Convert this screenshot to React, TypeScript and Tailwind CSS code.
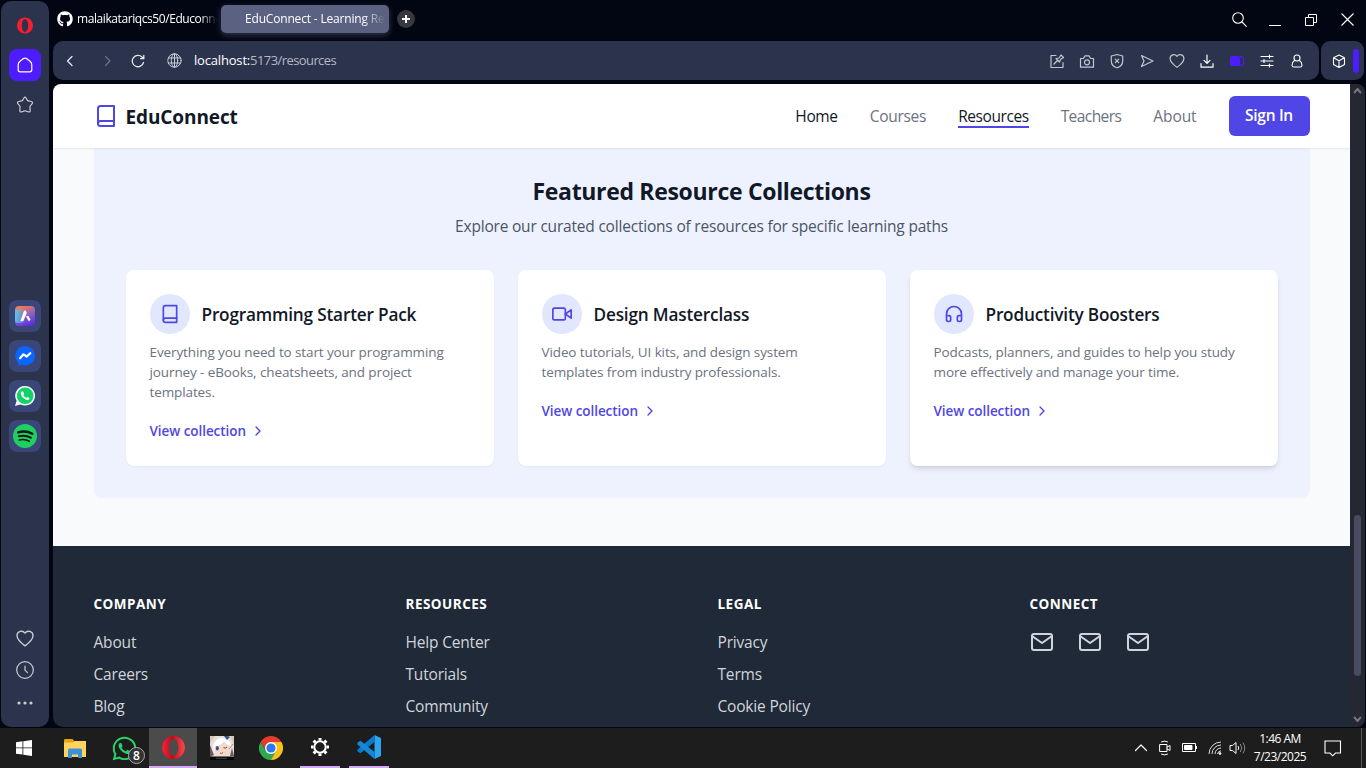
import React from "react";
import { FaGithub, FaWhatsapp } from "react-icons/fa";

type P = { className?: string; children: React.ReactNode; size?: number; sw?: number; vb?: string };
const Ico = ({ className = "", children, size = 24, sw = 2, vb = "0 0 24 24" }: P) => (
  <svg width={size} height={size} viewBox={vb} fill="none" stroke="currentColor" strokeWidth={sw} strokeLinecap="round" strokeLinejoin="round" className={`shrink-0 ${className}`}>
    {children}
  </svg>
);

const Book = () => (
  <>
    <path d="M4 19.5A2.5 2.5 0 0 1 6.5 17H20" />
    <path d="M6.5 2H20v20H6.5A2.5 2.5 0 0 1 4 19.5v-15A2.5 2.5 0 0 1 6.5 2z" />
  </>
);
const Video = () => (
  <>
    <path d="M23 7l-7 5 7 5V7z" />
    <rect x="1" y="5" width="15" height="14" rx="2" />
  </>
);
const Headphones = () => (
  <path d="M3 14h3a2 2 0 0 1 2 2v3a2 2 0 0 1-2 2H5a2 2 0 0 1-2-2v-7a9 9 0 0 1 18 0v7a2 2 0 0 1-2 2h-1a2 2 0 0 1-2-2v-3a2 2 0 0 1 2-2h3" />
);
const Mail = () => (
  <>
    <path d="M4 4h16c1.100 0 2 .9 2 2v12c0 1.100-.9 2-2 2H4c-1.100 0-2-.9-2-2V6c0-1.100.9-2 2-2z" />
    <path d="m22 6-10 7L2 6" />
  </>
);

const heart = "M8 14C4 11 1.500 8.500 1.500 5.600A3.600 3.600 0 0 1 8 3.600a3.600 3.600 0 0 1 6.500 2C14.500 8.500 12 11 8 14z";

function Sidebar() {
  const tile = "flex size-8 items-center justify-center rounded-lg bg-[#3a4677]";
  return (
    <aside className="ml-px mt-px flex h-[726px] w-12 shrink-0 flex-col items-center rounded-[10px] bg-[#2c334c]">
      <svg className="mt-4" width="16" height="17" viewBox="0 0 16 17">
        <path fillRule="evenodd" fill="#fa1e2d" d="M8 .5a8 8 0 1 0 0 16a8 8 0 1 0 0-16zM8 2.200c2 0 3.200 2.600 3.200 6.300S10 14.800 8 14.800S4.800 12.200 4.800 8.500S6 2.200 8 2.200z" />
      </svg>
      <div className="mt-[15px] flex size-8 items-center justify-center rounded-lg bg-[#4d1cff] text-white">
        <Ico size={16} sw={1.2} vb="0 0 16 16"><path d="M5.800 2 3 4.200Q1.200 5.600 1.200 8v4.800a2 2 0 0 0 2 2h9.600a2 2 0 0 0 2-2V8q0-2.400-1.800-3.800L10.200 2Q8 .3 5.800 2z" /></Ico>
      </div>
      <Ico size={18} sw={1.2} vb="0 0 18 18" className="mt-[15px] text-[#c9ccd6]">
        <path d="M7.800 2.200Q9 .2 10.200 2.200l1.400 2.400 3.700.9q2 .6.800 2.200L13.900 10.500l.3 4q0 1.800-1.700 1.400L9 14.800l-3.500 1.100q-1.700.4-1.700-1.400l.3-4L1.900 7.700Q.7 6.100 2.700 5.500l3.700-.9z" />
      </Ico>
      <div className="mt-[186px] flex flex-col gap-2">
        <div className={tile}>
          <svg width="20" height="20" viewBox="0 0 20 20">
            <defs>
              <linearGradient id="aria" x1="0.300" y1="0" x2="0.700" y2="1"><stop offset="0" stopColor="#ff7a45" /><stop offset=".5" stopColor="#8a62c4" /><stop offset="1" stopColor="#5a2ee0" /></linearGradient>
              <linearGradient id="ariaL" x1="0" y1="0" x2="1" y2="0"><stop offset="0" stopColor="#4fc9ee" /><stop offset=".5" stopColor="#4fc9ee" stopOpacity="0" /></linearGradient>
            </defs>
            <rect width="20" height="20" rx="4" fill="url(#aria)" /><rect y="3" width="20" height="14" rx="3" fill="url(#ariaL)" />
            <path d="M9 4.800q1-.8 1.800 0l1 2.200-3.600 8.300H5.300z" fill="#fff" /><path d="M11 10.500q1.500-1.200 2.500-.3l2 3.300-1.500 2z" fill="#fff" />
          </svg>
        </div>
        <div className={tile}>
          <svg width="20" height="20" viewBox="0 0 20 20"><path d="M10 0a10 9.700 0 1 1-3.500 18.800L3.500 20v-3.200A9.700 9.700 0 0 1 10 0z" fill="#0b66ff" /><path d="m5 12.200 3.500-3.900 3.200 2.200 3.600-3.300" stroke="#fff" strokeWidth="2.200" fill="none" strokeLinejoin="round" strokeLinecap="round" /></svg>
        </div>
        <div className={tile}>
          <svg width="20" height="20" viewBox="0 0 20 20"><path d="M10.200 0a9.800 9.800 0 1 1-4.700 18.400L0 20l1.600-5.200A9.800 9.800 0 0 1 10.200 0z" fill="#f4f6f6" /><circle cx="10.200" cy="9.800" r="8.300" fill="#0fd366" /><path d="M7 5.200c-2 1-1.300 4 .900 6.400s5.200 3.500 6.500 1.500c.400-1-.200-1.500-1.700-2.100-.600-.200-1 .900-1.500.800-1-.300-2.700-2-2.800-2.800 0-.400.900-.900.700-1.400C8.500 6 8.100 5 7 5.200z" fill="#fff" /></svg>
        </div>
        <div className={tile}>
          <svg width="24" height="24" viewBox="0 0 24 24"><circle cx="12" cy="12" r="12" fill="#1fcf62" /><g stroke="#0b1a10" fill="none" strokeLinecap="round"><path d="M5.200 8.300c4.500-1.300 10-.9 14.200 1.400" strokeWidth="2.400" /><path d="M5.800 12.300c4-1.100 8.500-.600 12 1.400" strokeWidth="2" /><path d="M6.300 16c3.500-.900 7-.500 10 1.300" strokeWidth="1.600" /></g></svg>
        </div>
      </div>
      <div className="mt-[176px] flex flex-col items-center text-[#c9ccd6]">
        <Ico size={20} sw={1.100} vb="-0.100 -0.500 16.200 16.200"><path d={heart} /></Ico>
        <Ico size={18} sw={1.200} vb="0 0 18 18" className="mt-[13px]"><circle cx="9" cy="9" r="8.300" /><path d="M9 5v4.200l2.500 2.500" /></Ico>
        <svg width="16" height="4" viewBox="0 0 16 4" className="mt-[22px]" fill="currentColor"><circle cx="2" cy="2" r="1.600" /><circle cx="8" cy="2" r="1.600" /><circle cx="14" cy="2" r="1.600" /></svg>
      </div>
    </aside>
  );
}

function TabBar() {
  return (
    <div className="flex h-[41px] items-start text-[12px] text-white">
      <div className="mt-[9px] flex h-5 w-[165px] items-center overflow-hidden pl-1">
        <FaGithub className="size-4 shrink-0" />
        <span className="ml-1 w-[140px] shrink-0 overflow-hidden whitespace-nowrap tracking-[-0.420px] [mask-image:linear-gradient(90deg,#000_88%,transparent)]">malaikatariqcs50/Educonnect</span>
      </div>
      <div className="ml-[3px] mt-[5px] flex h-7 w-[168px] items-center rounded-[5px] bg-[#5b6180] pl-6 shadow-[0_2px_6px_#5b618088]">
        <span className="w-[140px] overflow-hidden whitespace-nowrap tracking-[-0.18px] [mask-image:linear-gradient(90deg,#000_84%,transparent)]">EduConnect - Learning Resources</span>
      </div>
      <div className="ml-2 mt-[10px] flex size-[18px] items-center justify-center rounded-full bg-[#37383f]">
        <svg width="8" height="8" stroke="#fff" strokeWidth="2"><path d="M4 0v8M0 4h8" /></svg>
      </div>
      <div className="ml-auto mr-3 mt-3 flex items-center text-white">
        <Ico size={15} sw={1.100} vb="0 0 15 15"><circle cx="6" cy="6" r="5.300" /><path d="m10 10 4.300 4.300" /></Ico>
        <svg width="12" height="14" className="ml-[22px]"><path d="M0 12.500h12" stroke="#fff" /></svg>
        <svg width="12" height="12" className="ml-6" fill="none" stroke="#fff"><path d="M.5 3.500h8v8h-8zM3.500 3.500v-3h8v8h-3" /></svg>
        <svg width="13" height="13" className="ml-6" stroke="#fff" strokeWidth="1.100"><path d="m.5.5 12 12M12.500.5l-12 12" /></svg>
      </div>
    </div>
  );
}

function AddressBar() {
  return (
    <div className="flex h-[39px] gap-0.5">
      <div className="flex w-[1266px] items-center rounded-[10px] bg-[#2c334c] pl-[10px] pr-[14px] text-[#e6e8ee]">
        <Ico size={14} sw={1.300} vb="0 0 14 14"><path d="M9 2.500 4.500 7 9 11.500" /></Ico>
        <Ico size={14} sw={1.200} vb="0 0 14 14" className="ml-[23px] text-[#6e7489]"><path d="M5.500 2.500 10 7l-4.500 4.500" /></Ico>
        <Ico size={14} sw={1.300} vb="0 0 14 14" className="ml-[17px]"><path d="M12.500 8.500A5.700 5.700 0 1 1 11 3l1.700 1.500M12.800 1.500v3.200H9.600" /></Ico>
        <Ico size={15} sw={1} vb="0 0 15 15" className="ml-[22px] text-[#c9ccd6]"><circle cx="7.500" cy="7.500" r="6.700" /><ellipse cx="7.500" cy="7.500" rx="3.200" ry="6.700" /><path d="M1.500 5h12M1.500 10h12M7.500 1v13" /></Ico>
        <span className="ml-3 whitespace-nowrap text-[13px] tracking-[-0.58px] text-[#b4b8c5]"><span className="tracking-[-0.18px] text-white">localhost:</span>5173/resources</span>
        <div className="ml-auto flex items-center gap-[14px] text-[#c3c6d0]">
          <Ico size={16} sw={1.200} vb="0 0 16 16"><path d="M7 2.500H2v12h12V9.500M5 11l3-3M7 5.500 10.500 9l1-2.500 3-2-2.500-2.500-2 3z" /></Ico>
          <Ico size={16} sw={1.200} vb="0 0 16 16"><path d="M1.500 5.500h3L6 2.800h4l1.500 2.700h3v8.700h-13z" /><circle cx="8" cy="9.300" r="2.500" /></Ico>
          <Ico size={16} sw={1.200} vb="0 0 16 16"><path d="M8 1.500 13.700 3v5c0 3.500-2.500 5.800-5.700 6.800C4.800 13.800 2.300 11.500 2.300 8V3zM6.300 6.200l3.400 3.400M9.700 6.200 6.300 9.600" /></Ico>
          <Ico size={16} sw={1.200} vb="0 0 16 16"><path d="M2.500 2.500 14 8 2.500 13.500 5 8z" /></Ico>
          <Ico size={16} sw={1.100} vb="0.500 0.500 15 15"><path d={heart} /></Ico>
          <Ico size={16} sw={1.200} vb="0 0 16 16" className="text-white"><path d="M8 2v8M5 7.300l3 3 3-3M2 10.500v3.700h12v-3.700" /></Ico>
          <svg width="16" height="16" viewBox="0 0 16 16"><rect x="1" y="3" width="10" height="10" rx="1.500" fill="#4d1cff" /><path d="M11 3.500h1.500L14.500 5v6l-2 1.500H11" stroke="#4d1cff" fill="none" strokeWidth="1.200" /></svg>
          <Ico size={16} sw={1.200} vb="0 0 16 16" className="text-white"><path d="M2 3.500h12M2 8h12M2 12.500h12M10.500 2v3M5 6.500v3M10.500 11v3" /></Ico>
          <Ico size={16} sw={1.100} vb="0 0 16 16" className="text-white"><circle cx="8" cy="5" r="3" /><path d="M5.500 7.500C3.500 8.800 3 10.500 3 12.200c0 1 .7 1.800 1.800 1.800h6.400c1.100 0 1.800-.8 1.800-1.800 0-1.700-.5-3.400-2.500-4.700" /></Ico>
        </div>
      </div>
      <div className="flex w-[43px] items-center rounded-[9px] bg-[#2c334c] pl-[10px] text-white">
        <Ico size={16} sw={1.100} vb="0 0 16 16"><path d="m8 2 5.500 2.800v6.600L8 14.500l-5.500-3.100V4.800zM2.500 4.800 8 7.800l5.500-3M8 7.800v6.500" /></Ico>
        <div className="ml-1.5 h-6 w-[6px] rounded-full bg-[#4d1cff]" />
      </div>
    </div>
  );
}

function Header() {
  return (
    <header className="z-10 flex h-16 shrink-0 items-center bg-white px-[40.5px] shadow-[0_1px_2px_rgba(0,0,0,0.08)]">
      <Ico className="text-[#4f46e5]"><Book /></Ico>
      <span className="ml-2 pt-0.5 text-[19px] font-bold tracking-[-0.1px] text-[#111827]">EduConnect</span>
      <nav className="ml-auto flex items-center gap-8 text-[15.500px] text-[#6b7280]">
        <span className="pt-0.5 tracking-[-0.35px] text-[#111827]">Home</span>
        <span className="pt-0.5 tracking-[-0.28px]">Courses</span>
        <span className="relative pt-0.5 tracking-[-0.43px] text-[#111827]">Resources<i className="absolute inset-x-0 bottom-px h-0.5 bg-[#4f46e5]" /></span>
        <span className="pt-0.5 tracking-[-0.56px]">Teachers</span>
        <span className="pt-0.5 tracking-[-0.1px]">About</span>
        <span className="flex h-10 w-[81px] items-center justify-center rounded-md bg-[#4f46e5] text-[15.500px] font-semibold tracking-[-0.300px] text-white">Sign In</span>
      </nav>
    </header>
  );
}

const cards = [
  { t: "Programming Starter Pack", d: ["Everything you need to start your programming", "journey - eBooks, cheatsheets, and project", "templates."], i: <Book />, s: "shadow-[0_1px_2px_rgba(0,0,0,0.05)]" },
  { t: "Design Masterclass", d: ["Video tutorials, UI kits, and design system", "templates from industry professionals."], i: <Video />, s: "shadow-[0_1px_2px_rgba(0,0,0,0.05)]" },
  { t: "Productivity Boosters", d: ["Podcasts, planners, and guides to help you study", "more effectively and manage your time."], i: <Headphones />, s: "shadow-[0_4px_6px_-1px_rgba(0,0,0,0.1),0_2px_4px_-2px_rgba(0,0,0,0.1)]" },
];

function Featured() {
  return (
    <main className="flex h-[398px] shrink-0 flex-col bg-[#f9fafb] px-[40.500px]">
      <section className="h-[350px] rounded-b-lg bg-[#eef2ff] px-8 pt-[27px]">
        <h2 className="text-center text-[23px] font-bold leading-8 tracking-[-0.32px] text-[#111827]">Featured Resource Collections</h2>
        <p className="mt-[7px] text-center text-[15.500px] leading-6 tracking-[-0.2px] text-[#4b5563]">Explore our curated collections of resources for specific learning paths</p>
        <div className="mt-8 grid grid-cols-3 gap-6">
          {cards.map((c) => (
            <article key={c.t} className={`h-[196px] whitespace-nowrap rounded-lg bg-white p-6 ${c.s}`}>
              <div className="flex h-10 items-center">
                <div className="flex size-10 items-center justify-center rounded-full bg-[#e0e7ff] text-[#4f46e5]"><Ico size={20}>{c.i}</Ico></div>
                <h3 className="ml-3 pt-px text-[17.200px] font-semibold tracking-[-0.18px] text-[#111827]">{c.t}</h3>
              </div>
              <div className="mt-2 text-[13.500px] leading-5 tracking-[-0.11px] text-[#6b7280]">
                {c.d.map((l) => <p key={l}>{l}</p>)}
              </div>
              <a className="mt-[19px] flex h-5 items-center text-[13.500px] font-semibold tracking-[-0.06px] text-[#4f46e5]">
                <span className="w-24">View collection</span>
                <Ico size={16} className="ml-1"><path d="m9 18 6-6-6-6" /></Ico>
              </a>
            </article>
          ))}
        </div>
      </section>
    </main>
  );
}

function Footer() {
  const cols = [
    ["COMPANY", "About", "Careers", "Blog"],
    ["RESOURCES", "Help Center", "Tutorials", "Community"],
    ["LEGAL", "Privacy", "Terms", "Cookie Policy"],
  ];
  const head = "text-[13.500px] font-bold leading-5 tracking-[0.480px] text-white";
  return (
    <footer className="grid flex-1 grid-cols-4 gap-8 bg-[#1f2937] px-[40.500px] pt-12">
      {cols.map(([h, ...l]) => (
        <div key={h}>
          <h4 className={head}>{h}</h4>
          <ul className="mt-4 flex flex-col gap-2 text-[15.500px] leading-6 tracking-[-0.18px] text-[#d1d5db]">{l.map((x) => <li key={x}>{x}</li>)}</ul>
        </div>
      ))}
      <div>
        <h4 className={head}>CONNECT</h4>
        <div className="mt-4 flex gap-6 text-[#d1d5db]">{[0, 1, 2].map((k) => <Ico key={k}><Mail /></Ico>)}</div>
      </div>
    </footer>
  );
}

function Taskbar() {
  const cell = "flex h-10 items-center justify-center";
  return (
    <div className="flex h-10 items-center bg-[#1d1d1d] text-white">
      <div className={`${cell} w-12`}><svg width="16" height="16" viewBox="0 0 16 16" fill="#fff"><path d="M0 2.200 6.500 1.300v6.200H0zM7.300 1.200 16 0v7.500H7.300zM0 8.300h6.500v6.200L0 13.700zM7.300 8.300H16V16l-8.700-1.200z" /></svg></div>
      <div className={`${cell} ml-[3px] w-12`}><svg width="22" height="19" viewBox="0 0 22 19"><path d="M0 1.200Q0 0 1.200 0H8.500l1.500 1.500V5H0z" fill="#e7a20c" /><path d="M0 3.500h9l1.500-1.500H22v16H0z" fill="#ffd35c" /><path d="M4 19v-8q0-1.500 1.500-1.500h11Q18 9.500 18 11v8h-4v-3.500H8V19z" fill="#3b92d8" /></svg></div>
      <div className={`${cell} relative ml-px w-12`}>
        <FaWhatsapp className="size-[27px] text-[#25d366]" />
        <span className="absolute left-[28px] top-[19px] flex size-[17px] items-center justify-center rounded-full border border-[#aaa] bg-[#333] text-[12px] font-semibold">8</span>
      </div>
      <div className={`${cell} ml-px w-12 border-b-2 border-[#d3aaf5] bg-[#4b4b4b]`}>
        <svg width="23" height="23" viewBox="0 0 23 23"><defs><linearGradient id="op" x1="0" x2="1"><stop offset="0" stopColor="#ff2035" /><stop offset=".45" stopColor="#c00a1c" /><stop offset="1" stopColor="#ff4a4a" /></linearGradient></defs><path fillRule="evenodd" fill="url(#op)" d="M11.500 0a11.300 11.500 0 1 0 0 23a11.300 11.500 0 1 0 0-23zM11.500 3c2.800 0 4.800 3.700 4.800 8.500S14.300 20 11.500 20S6.700 16.300 6.700 11.500S8.700 3 11.500 3z" /></svg>
      </div>
      <div className={`${cell} ml-px w-12`}>
        <svg width="24" height="24" viewBox="0 0 24 24"><rect width="24" height="24" fill="#d8cbbd" /><path d="M0 8 5 0h15l4 10v12H0z" fill="#e6dfdc" /><path d="M4 9q6-6 14-1l1 7q-4 6-10 5-5-3-5-11z" fill="#f6d8c8" /><path d="M3 10Q6 1 12 2q8 0 9 8-5-1-7-5-3 5-9 5l-1 8z" fill="#fff" /><path d="M14 0l3 4 3-3-2-1z" fill="#36529a" /><ellipse cx="7.300" cy="12.300" rx="1.500" ry="2.200" fill="#354c9c" /><path d="M13.500 11.500q2 1.500 3.500-.500" stroke="#68493f" fill="none" /><path d="M0 9l4 10-4 2zM22 12l2 8h-4z" fill="#6a5c60" /><path d="M19 13l4-5" stroke="#c5876d" /><path d="M10 17q1.500 1 3-.5" stroke="#a45a50" fill="none" /><path d="M0 20.500h24V24H0z" fill="#080808" /><path d="M6 22.300h11" stroke="#777" strokeWidth=".6" /></svg>
      </div>
      <div className={`${cell} ml-px w-12`}>
        <svg width="24" height="24" viewBox="0 0 24 24"><path d="M12 12 12 6h10.400A12 12 0 0 1 12 24z" fill="#fbc116" /><path d="M1.600 6A12 12 0 0 0 12 24l5.200-9H6.800z" fill="#2da94f" /><path d="M1.600 6 6.800 15 12 12 12 6h10.400A12 12 0 0 0 1.600 6z" fill="#e33b2e" /><circle cx="12" cy="12" r="6" fill="#fff" /><circle cx="12" cy="12" r="4.600" fill="#2f79ee" /></svg>
      </div>
      <div className={`${cell} ml-[5px] w-[40px] border-b-2 border-[#d3aaf5]`}>
        <svg width="20" height="20" viewBox="-10 -10 20 20" fill="none" stroke="#fff"><circle r="5.700" strokeWidth="2" />{[0, 45, 90, 135, 180, 225, 270, 315].map((a) => <path key={a} d="M0-6.500V-9" strokeWidth="3" transform={`rotate(${a})`} />)}</svg>
      </div>
      <div className={`${cell} ml-[9px] w-[40px] border-b-2 border-[#d3aaf5]`}>
        <svg width="24" height="24" viewBox="0 0 24 24"><path d="M17.500 0 24 3v18l-6.500 3z" fill="#2ba6ee" /><path d="M17.500 0v7L3.500 18.200.5 16.500v-2z" fill="#0b7ac9" /><path d="M17.500 24v-7L3.500 5.800.5 7.500v2z" fill="#1488d8" /></svg>
      </div>
      <div className="ml-auto flex h-10 items-center">
        <Ico size={14} sw={1.200} vb="0 0 14 14"><path d="m1.500 9.500 5.500-5.500 5.500 5.500" /></Ico>
        <Ico size={16} sw={1} vb="0 0 14 16" className="ml-[9px]"><path d="M2 4.500h7v7H2zM9 7l3-1.500v5L9 9M3.500 1.800q3-1.500 6 0M3.500 14.200q3 1.500 6 0" /></Ico>
        <svg width="16" height="10" className="ml-[9px]" fill="none" stroke="#fff"><path d="M.5.5h13v8H.5z" /><path d="M2.500 2.500h7.500v4H2.500z" fill="#fff" /><path d="M14.500 3v3" /></svg>
        <svg width="14" height="14" viewBox="0 0 14 14" className="ml-[10px]" fill="none" stroke="#ddd"><path d="M1 13A12 12 0 0 1 13 1M4 13A9 9 0 0 1 13 4M7 13a6 6 0 0 1 6-6M9.500 13A4 4 0 0 1 13 9.800" /><circle cx="12" cy="12.500" r="1" fill="#fff" /></svg>
        <svg width="18" height="14" viewBox="0 0 18 14" className="ml-[7px]" fill="none" stroke="#fff"><path d="M1 4.500h2.500L7 1.500v11L3.500 9.500H1zM9 5q1.500 2 0 4" /><path d="M11.300 3q3 4 0 8M13.800 1.500q4 5.500 0 11" stroke="#888" /></svg>
        <div className="ml-1 w-[58px] whitespace-nowrap text-center text-[12px] leading-[18px] tracking-[-0.500px]"><p>1:46 AM</p><p>7/23/2025</p></div>
        <svg width="18" height="17" viewBox="0 0 18 17" className="ml-[15px]" fill="none" stroke="#fff" strokeWidth="1.100"><path d="M1 1h15.500v12h-5L8.700 15.800 6 13H1z" /></svg>
        <div className="ml-[19px] mr-1 h-10 w-px bg-[#5a5a5a]" />
      </div>
    </div>
  );
}

export default function App() {
  return (
    <div className="flex h-[768px] w-[1366px] flex-col overflow-hidden bg-[#020512] font-['Open_Sans','Noto_Sans',sans-serif]">
      <div className="flex h-[728px]">
        <Sidebar />
        <div className="ml-1 flex w-[1313px] flex-col">
          <TabBar />
          <AddressBar />
          <div className="mt-1 flex h-[643px]">
            <div className="flex w-[1297px] flex-col overflow-hidden rounded-bl-[10px] rounded-tl-[8px]">
              <Header />
              <Featured />
              <Footer />
            </div>
            <div className="flex w-[15px] flex-col items-center rounded-r-[8px] bg-[#252733] text-[#77757a]">
              <Ico size={9} sw={2} vb="0 0 9 9" className="mt-0.5"><path d="M1.500 6.500 4.500 3l3 3.500" /></Ico>
              <div className="mt-[420px] h-[161px] w-[7px] rounded-full bg-[#4a4b63]" />
              <Ico size={9} sw={2} vb="0 0 9 9" className="mb-[3px] mt-auto"><path d="M1.500 2.500 4.500 6l3-3.500" /></Ico>
            </div>
          </div>
        </div>
      </div>
      <Taskbar />
    </div>
  );
}
